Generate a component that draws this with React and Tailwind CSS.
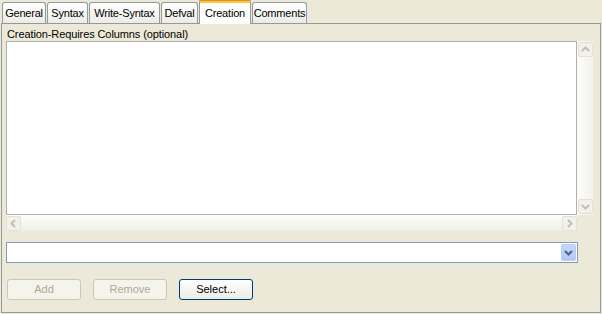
import React from 'react';

const font = { fontFamily: '"Liberation Sans", Arial, sans-serif' };

const tabs = [
    { label: 'General', w: 'w-[44px]' },
    { label: 'Syntax', w: 'w-[41px]' },
    { label: 'Write-Syntax', w: 'w-[71px]' },
    { label: 'Defval', w: 'w-[37px]' },
    { label: 'Creation', w: 'w-[52px]', active: true },
    { label: 'Comments', w: 'w-[55px]' },
];

const Chevron = ({ dir, color = '#C2BFB0' }) => {
    const paths = {
        up: 'M1 6 L4.5 2.5 L8 6',
        down: 'M1 3 L4.5 6.5 L8 3',
        left: 'M6 1 L2.5 4.5 L6 8',
        right: 'M3 1 L6.5 4.5 L3 8',
    };
    return (
        <svg width="9" height="9" viewBox="0 0 9 9">
            <path d={paths[dir]} fill="none" stroke={color} strokeWidth="2" />
        </svg>
    );
};

const ScrollButton = ({ dir }) => (
    <div className="w-[15px] h-[15px] rounded-[2px] border border-[#E3E1D6] bg-[#F2F1EB] flex items-center justify-center">
        <Chevron dir={dir} />
    </div>
);

const Button = ({ label, disabled }) => (
    <button
        className={`w-[74px] h-[21px] rounded-[3px] border text-[11px] flex items-center justify-center ${disabled
            ? 'border-[#C9C7BA] bg-[#F5F4EA] text-[#ACA899]'
            : 'border-[#003C74] bg-gradient-to-b from-white to-[#ECEBE6] text-black'
            }`}
        style={font}
    >
        {label}
    </button>
);

export default function App() {
    return (
        <div className="w-[602px] h-[314px] bg-[#ECE9D8] text-[11px] text-black" style={font}>
            {/* tab strip */}
            <div className="flex items-end h-[23px] pl-[2px] gap-[1px] tracking-[-0.2px]">
                {tabs.map(t => t.active ? (
                    <div
                        key={t.label}
                        className={`${t.w} h-[24px] -mb-[1px] relative z-10 bg-white border-x border-[#919B9C] rounded-t-[3px] flex flex-col`}
                    >
                        <div className="h-[1px] bg-[#E68B2C] rounded-t-[3px] -mx-[1px]" />
                        <div className="h-[2px] bg-[#FFC73C]" />
                        <div className="flex-1 flex items-start justify-center pt-[2px]">{t.label}</div>
                    </div>
                ) : (
                    <div
                        key={t.label}
                        className={`${t.w} h-[21px] border-t border-x border-[#919B9C] rounded-t-[3px] bg-gradient-to-b from-white to-[#ECEBE5] flex items-center justify-center pt-[1px]`}
                    >
                        {t.label}
                    </div>
                ))}
            </div>

            {/* panel */}
            <div className="ml-[1px] w-[600px] h-[290px] border border-[#919B9C] flex flex-col">
                <div className="h-[14px] mt-[3px] ml-[5px] leading-[14px] tracking-[-0.1px]">Creation-Requires Columns (optional)</div>

                <div className="ml-[4px] flex">
                    <div className="flex flex-col">
                        <div className="w-[571px] h-[174px] bg-white border border-[#B0B0B0]" />
                        <div className="w-[571px] h-[16px] bg-gradient-to-b from-[#FDFDFB] to-[#EFEEE7] flex items-center justify-between pt-[1px]">
                            <ScrollButton dir="left" />
                            <ScrollButton dir="right" />
                        </div>
                    </div>
                    <div className="w-[16px] h-[174px] bg-gradient-to-r from-[#FDFDFB] to-[#F3F2EC] flex flex-col justify-between items-center py-[1px] pl-[1px]">
                        <ScrollButton dir="up" />
                        <ScrollButton dir="down" />
                    </div>
                </div>

                {/* combo */}
                <div className="ml-[4px] mt-[11px] w-[572px] h-[21px] bg-white border border-[#7F9DB9] flex justify-end p-[1px]">
                    <div className="w-[15px] h-full rounded-[2px] bg-gradient-to-b from-[#C6D6FD] to-[#B4C8F6] border border-[#B9CCF8] flex items-center justify-center">
                        <Chevron dir="down" color="#4D6185" />
                    </div>
                </div>

                {/* buttons */}
                <div className="ml-[5px] mt-[16px] flex gap-[12px]">
                    <Button label="Add" disabled />
                    <Button label="Remove" disabled />
                    <Button label="Select..." />
                </div>
            </div>
        </div>
    );
}
